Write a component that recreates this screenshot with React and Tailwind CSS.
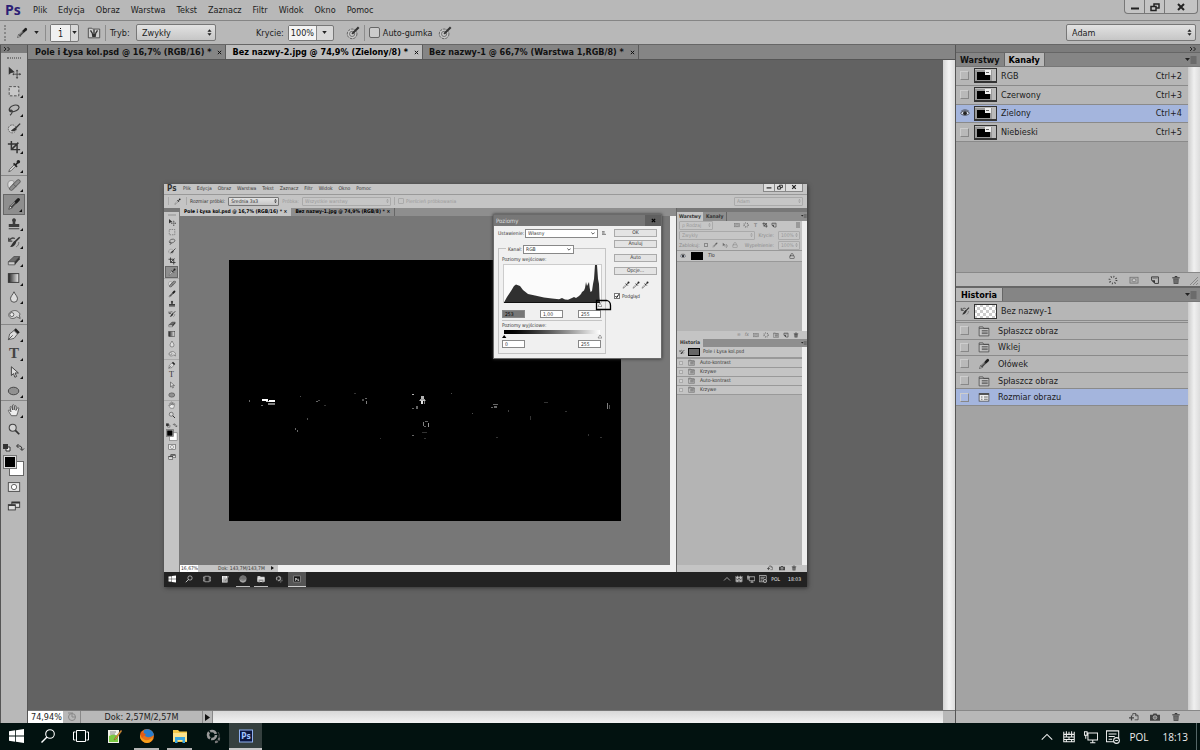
import React from 'react';
import { Lock } from 'lucide-react';

const MENU = ['Plik', 'Edycja', 'Obraz', 'Warstwa', 'Tekst', 'Zaznacz', 'Filtr', 'Widok', 'Okno', 'Pomoc'];

const GLYPHS = {
  move: (
    <g>
      <path d="M2 2 L2 11 L4.500 9 L9 8.200 Z" fill="#333" />
      <path d="M11.500 6v9M7 10.500h9" stroke="#444" strokeWidth="1" />
      <path d="M11.500 5l1.500 2h-3zM11.500 16l1.500-2h-3zM6 10.500l2-1.500v3zM16 10.500l-2-1.500v3z" fill="#444" />
    </g>
  ),
  marquee: <rect x="2.500" y="3" width="11" height="10.500" fill="#c8c8c8" stroke="#444" strokeDasharray="3 1.800" />,
  lasso: (
    <path d="M4 10C1 8 3 3.500 8 2.500s7 2 5 4.500-8 4-9 2.500 1-2 2-.5-.5 3-2.500 5" fill="none" stroke="#3a3a3a" strokeWidth="1.300" />
  ),
  quick: (
    <g>
      <circle cx="6" cy="9" r="4.500" fill="#ccc" stroke="#555" strokeDasharray="2 1" />
      <path d="M15 3L9.500 8.500" stroke="#333" strokeWidth="1.600" />
      <path d="M9.500 7.500c-2 .5-2.500 2-5 3.500 2 1.500 5 1 6.500-2z" fill="#333" />
    </g>
  ),
  crop: <path d="M5 1v10h10M1 4.500h10.500V15M5 11L13 3" fill="none" stroke="#333" strokeWidth="1.700" />,
  dropper: (
    <g>
      <path d="M8.500 6.500L3 12l-1 2.500L4.500 13.500 10 8z" fill="#e5e5e5" stroke="#444" strokeWidth=".9" />
      <path d="M7.500 5L11.500 9M9.500 7L13 3.500" stroke="#222" strokeWidth="1.800" />
      <circle cx="13" cy="3" r="2" fill="#222" />
    </g>
  ),
  heal: (
    <g>
      <path d="M2 4c3-2 6-1 6 1l-4 8c-3-1-4-6-2-9z" fill="#ddd" stroke="#777" strokeWidth=".8" />
      <path d="M5 12L13 4" stroke="#555" strokeWidth="5" strokeLinecap="round" />
      <path d="M5 12L13 4" stroke="#8d8d8d" strokeWidth="3.400" strokeLinecap="round" />
      <path d="M7.500 7.200l3.200 3.200" stroke="#555" strokeWidth="1" />
    </g>
  ),
  pencil: (
    <g>
      <path d="M2 14l1.500-4L6 12.500z" fill="#ddd" stroke="#333" strokeWidth=".8" />
      <path d="M4.500 11.500L10 6" stroke="#444" strokeWidth="3.200" />
      <path d="M10.500 5.500L13 3" stroke="#1d1d1d" strokeWidth="3.600" strokeLinecap="round" />
      <path d="M4.500 10.500L9 6" stroke="#aaa" strokeWidth="1" />
    </g>
  ),
  stamp: (
    <path d="M8 1.500a2.200 2.200 0 0 1 2 3.200C9.300 6 9.300 7 9.600 8H14v3.500H2V8h4.400C6.700 7 6.700 6 6 4.700A2.200 2.200 0 0 1 8 1.500zM2 12.800h12V14H2z" fill="#3c3c3c" />
  ),
  history: (
    <g>
      <path d="M14.500 2.500L8 9" stroke="#333" strokeWidth="1.800" />
      <path d="M9.500 6.500C6.500 7.500 6 10.500 3.500 13.500c3 .5 6-1.500 7-5z" fill="#333" />
      <path d="M3 6C4 4 6.500 3 9 4M2 3v4h4" fill="none" stroke="#444" strokeWidth="1.500" />
      <path d="M13.500 8c0 3-1 4.500-3 5.500" fill="none" stroke="#666" />
    </g>
  ),
  eraser: (
    <g>
      <path d="M1.500 10L8 4h6.500L9 10z" fill="#6c6c6c" stroke="#444" strokeWidth=".8" />
      <path d="M1.500 10H9v3.500H1.500z" fill="#ccc" stroke="#444" strokeWidth=".8" />
      <path d="M9 10l5.500-6v3L9 13.500z" fill="#333" />
    </g>
  ),
  gradient: (
    <g>
      <defs>
        <linearGradient id="tool-gradient"><stop stopColor="#222" /><stop offset="1" stopColor="#eee" /></linearGradient>
      </defs>
      <rect x="1.500" y="3" width="12" height="10" fill="url(#tool-gradient)" stroke="#333" />
    </g>
  ),
  drop: <path d="M8 2c1 3 4 5 4 8a4 4 0 0 1-8 0c0-3 3-5 4-8z" fill="#ddd" stroke="#444" />,
  dodge: (
    <g>
      <path d="M6 3.500c4-1.500 7 0 9 3.500l-1 1 1 4-4-2c-2 2-6 3-8 .5S2 5 6 3.500z" fill="#d5d5d5" stroke="#555" />
      <circle cx="5.500" cy="7.500" r="2.300" fill="#eee" stroke="#555" />
    </g>
  ),
  pen: (
    <g>
      <path d="M1.500 14.500L3 8l5-4 4 4-4 5z" fill="#ddd" stroke="#444" strokeWidth=".9" />
      <path d="M1.500 14.500L6.500 9.500" stroke="#444" />
      <path d="M9 2.500L13.500 7" stroke="#222" strokeWidth="3" />
    </g>
  ),
  arrow: <path d="M5 2v10l2.400-2.200L9 14l2-.9-1.800-4H13z" fill="#ddd" stroke="#333" />,
  ellipse: <ellipse cx="7.500" cy="8" rx="6" ry="4.300" fill="#909090" stroke="#3c3c3c" />,
  hand: (
    <path d="M5 14.500C3.500 12 2 10 1.500 8.500c.8-1 2 0 3 1.500L3.500 4.500c.8-1 1.700-.5 2 .5L6.300 8V2.500c.8-1 1.800-.5 1.800.3V8l1-4.500c.8-.8 1.700-.3 1.500.6L10.200 8.500l1.800-3c1-.5 1.700.2 1.300 1.200-1 3-1 5.300-2.300 7.800z" fill="#eee" stroke="#444" strokeWidth=".9" />
  ),
  zoom: (
    <g>
      <circle cx="6.500" cy="6.500" r="4" fill="#d5d5d5" stroke="#444" strokeWidth="1.200" />
      <path d="M9.500 9.500L14 14" stroke="#333" strokeWidth="2" />
    </g>
  ),
  mask: (
    <g>
      <rect x="1.500" y="3" width="13" height="10" fill="#e8e8e8" stroke="#444" />
      <circle cx="8" cy="8" r="3" fill="#fff" stroke="#555" />
    </g>
  ),
  screen: (
    <g fill="#ddd" stroke="#333">
      <rect x="5.500" y="3.500" width="9" height="6" />
      <path d="M5.500 4.200h9" strokeWidth="2" />
      <rect x="1.500" y="6.500" width="8" height="6" />
      <path d="M1.500 7.200h8" strokeWidth="1.500" />
    </g>
  ),
  target: (
    <g>
      <circle cx="7" cy="9" r="5.500" fill="#c8c8c8" stroke="#555" strokeDasharray="3 1" />
      <circle cx="7" cy="9" r="3" fill="none" stroke="#666" />
      <path d="M14.500 1.500L7 9" stroke="#333" strokeWidth="2.400" />
    </g>
  ),
  brushPanel: (
    <g>
      <path d="M1.500 2.500h4l1 1h8v10h-13z" fill="#cfcfcf" stroke="#444" />
      <path d="M4 5l2.500 4M8 4v5M12 5L9.500 9" stroke="#333" strokeWidth="1.500" />
      <path d="M5.500 9h5l-.5 3.500H6z" fill="#333" />
    </g>
  ),
  state: (
    <g fill="none" stroke="#444">
      <path d="M1.500 2.500h5l1 2h7v10h-13z" fill="#c6c6c6" />
      <path d="M1.500 4.500h13M5 7.500h8M5 9.500h8M5 11.500h8" />
    </g>
  ),
  dialogState: (
    <g fill="none" stroke="#444">
      <rect x="1.500" y="3.500" width="13" height="10" fill="#eee" />
      <path d="M1.500 4.200h13" strokeWidth="2" />
      <path d="M4 8h2M8 8h5M4 11h2M8 11h5" />
    </g>
  ),
  loadSel: <circle cx="8" cy="8" r="5.500" fill="none" stroke="#444" strokeWidth="3" strokeDasharray="1.500 2.820" />,
  saveMask: (
    <g>
      <rect x="1.500" y="3.500" width="13" height="9.500" fill="#aaa" stroke="#666" />
      <rect x="5" y="6" width="6" height="4.500" rx="2" fill="#ccc" stroke="#666" />
    </g>
  ),
  newItem: (
    <g>
      <path d="M2.500 3h11v10.500H8L2.500 8.500z" fill="#bbb" stroke="#3a3a3a" strokeWidth="1.500" />
      <path d="M2.500 8.500H8v5z" fill="#333" />
      <path d="M4 5h8" stroke="#444" />
    </g>
  ),
  trash: (
    <g>
      <path d="M3.500 5.500h9l-.7 9H4.200z" fill="#555" />
      <path d="M2 4.500h12M6 2.500h4" stroke="#333" strokeWidth="1.600" />
      <path d="M6.500 7v6M9.500 7v6" stroke="#aaa" strokeWidth=".8" />
    </g>
  ),
  newDoc: (
    <g fill="none" stroke="#444" strokeWidth="1.300">
      <path d="M6 6V2.500h5L14.500 6v6.500H9M10.500 2.500V6h4" />
      <path d="M0 9.500h8M4 5.500v8" strokeWidth="2" />
    </g>
  ),
  camera: (
    <g>
      <path d="M0 4.500h4.500l1-2h5l1 2H16v9.500H0z" fill="#444" />
      <circle cx="8" cy="8.800" r="2.900" fill="#777" stroke="#ccc" />
    </g>
  ),
  eye: (
    <g>
      <path d="M1 8.500C4 3.500 12 3.500 15 8.500 12 12.500 4 12.500 1 8.500z" fill="#d8dff0" stroke="#222" strokeWidth="1.200" />
      <circle cx="8" cy="8.200" r="3" fill="#222" />
      <path d="M1.500 5.500C5 2 11 2 14.500 5.500" fill="none" stroke="#333" />
    </g>
  ),
};

function Glyph({ name, className }) {
  return (
    <svg viewBox="0 0 16 16" className={className} fill="none" aria-hidden="true">
      {GLYPHS[name]}
    </svg>
  );
}

const TOOL_GROUPS = [
  { big: 'h-[112px]', small: 'h-[60px]', tools: ['move', 'marquee', 'lasso', 'quick', 'crop', 'dropper'] },
  { big: 'h-[149px]', small: 'h-[81px]', tools: ['heal', 'pencil', 'stamp', 'history', 'eraser', 'gradient', 'drop', 'dodge'] },
  { big: 'h-[76px]', small: 'h-[41px]', tools: ['pen', 'type', 'arrow', 'ellipse'] },
  { big: 'h-[38px]', small: 'h-[20px]', tools: ['hand', 'zoom'] },
];

function Toolbar({ mini = false, active }) {
  const icon = mini ? 'h-2 w-2' : 'h-3.5 w-3.5';
  return (
    <div className={mini ? 'flex w-[15px] shrink-0 flex-col bg-[#c4c4c4]' : 'flex w-7 shrink-0 flex-col border-x border-[#555] bg-[#b8b8b8]'}>
      <div className={mini ? 'h-1 bg-[#777]' : 'flex h-2 items-center bg-[#7c7c7c] pl-0.5'}>
        {!mini && <Chevrons />}
      </div>
      <div className={mini ? 'mx-auto my-0.5 h-0.5 w-2 bg-[#aaa]' : 'mx-auto mt-1 mb-1 h-0.5 w-3.5 border-y border-dotted border-[#777]'} />
      {TOOL_GROUPS.map((group, i) => (
        <div
          key={i}
          className={`flex flex-col ${mini ? group.small : group.big} ${i ? (mini ? 'border-t border-[#aaa]' : 'border-t border-[#888]') : ''}`}
        >
          {group.tools.map((tool) => (
            <button
              key={tool}
              aria-label={tool}
              className={`relative flex flex-1 items-center justify-center ${mini ? 'mx-px' : 'mx-0.5'} ${
                tool === active ? 'border border-[#666] bg-[#8e8e8e]' : ''
              }`}
            >
              {tool === 'type' ? (
                <span className={mini ? "font-['Liberation_Serif',serif] text-[8px] leading-none" : "font-['Liberation_Serif',serif] text-[15px] leading-none font-bold text-[#444]"}>T</span>
              ) : (
                <Glyph name={tool} className={icon} />
              )}
              {!mini && tool !== 'move' && tool !== 'zoom' && (
                <svg viewBox="0 0 3 3" className="absolute right-0.5 bottom-0.5 h-[3px] w-[3px]" aria-hidden="true">
                  <path d="M3 0v3H0z" fill="#111" />
                </svg>
              )}
            </button>
          ))}
        </div>
      ))}
      <svg viewBox="0 0 26 36" className={mini ? 'mx-auto mt-0.5 h-[20px] w-[14px] shrink-0' : 'mt-1 h-9 w-[26px] shrink-0'} role="img" aria-label="Kolory">
        <path d="M5 5h4v4H5z" fill="#eee" stroke="#333" />
        <path d="M2 2h5v5H2z" fill="#333" />
        <path d="M16 4h3q2 0 2 4M17.500 2l-2 2 2 2M19 6.500l2 2 2-2" fill="none" stroke="#333" />
        <rect x="8.500" y="19.500" width="14" height="14" fill="#fff" stroke="#666" />
        <rect x="2.500" y="13.500" width="13" height="13" fill="#000" stroke="#777" />
        <rect x="3.500" y="14.500" width="11" height="11" fill="#000" stroke="#ddd" />
      </svg>
      <button aria-label="Maska" className={mini ? 'flex h-2.5 items-center justify-center' : 'flex h-[18px] items-center justify-center'}>
        <Glyph name="mask" className={icon} />
      </button>
      <button aria-label="Tryb ekranu" className={mini ? 'flex h-2.5 items-center justify-center' : 'flex h-5 items-center justify-center'}>
        <Glyph name="screen" className={icon} />
      </button>
    </div>
  );
}

function Chevrons() {
  return (
    <svg viewBox="0 0 8 6" className="h-1.5 w-2" aria-hidden="true">
      <path d="M1 1l2 2-2 2M4.500 1l2 2-2 2" fill="none" stroke="#222" />
    </svg>
  );
}

function WindowButtons({ mini = false }) {
  const cell = mini ? 'flex w-[11px] items-center justify-center' : 'flex w-5 items-center justify-center';
  const icon = mini ? 'h-1.5 w-1.5' : 'h-2.5 w-2.5';
  return (
    <div
      className={
        mini
          ? 'mr-1 flex h-2 divide-x divide-[#888] border border-t-0 border-[#888] bg-[#ddd]'
          : 'mr-0.5 flex h-3.5 divide-x divide-[#777] rounded-b-sm border border-t-0 border-[#777] bg-[#c4c4c4]'
      }
    >
      <button aria-label="Minimalizuj" className={cell}>
        <svg viewBox="0 0 10 10" className={icon}><path d="M1 6.500h8" stroke="#222" strokeWidth="2" /></svg>
      </button>
      <button aria-label="Przywróć" className={cell}>
        <svg viewBox="0 0 10 10" className={icon} fill="none" stroke="#222" strokeWidth="1.500"><path d="M4 5V2h5v4H6M1 4.500h5v4H1z" /></svg>
      </button>
      <button aria-label="Zamknij" className={mini ? 'flex w-4 items-center justify-center' : 'flex w-8 items-center justify-center'}>
        <svg viewBox="0 0 10 10" className={icon}><path d="M2 2l6 6M8 2L2 8" stroke="#222" strokeWidth="2" /></svg>
      </button>
    </div>
  );
}

function PickBox({ value, label, className, mini = false, dim = false }) {
  return (
    <span
      className={`relative flex items-center ${mini ? 'h-[9px] rounded-[1px]' : 'h-[17px] rounded-xs'} border ${
        dim ? 'border-[#aaa] bg-[#c6c6c6] text-[#999]' : 'border-[#777] bg-linear-to-b from-[#e2e2e2] to-[#c6c6c6]'
      } ${className}`}
    >
      <select aria-label={label} className={`h-full w-full appearance-none bg-transparent outline-none ${mini ? 'px-0.5' : 'px-[5px]'}`}>
        <option>{value}</option>
      </select>
      <svg viewBox="0 0 6 8" className={`pointer-events-none absolute ${mini ? 'right-px h-1 w-[3px]' : 'right-[3px] h-[7px] w-[5px]'}`} aria-hidden="true">
        <path d="M3 0l2.500 3h-5zM3 8L.5 5h5z" fill={dim ? '#999' : '#222'} />
      </svg>
    </span>
  );
}

function Separator({ mini = false }) {
  return <span className={mini ? 'h-2 w-px bg-[#aaa]' : 'h-4 w-px bg-[#8c8c8c]'} />;
}

function PanelMenuIcon({ mini = false }) {
  return (
    <svg viewBox="0 0 12 8" className={mini ? 'ml-auto h-1 w-1.5 self-center' : 'mr-[3px] ml-auto h-2 w-3 self-center'} aria-hidden="true">
      <path d="M0 2h5L2.500 5z" fill="#222" />
      <path d="M5.500 1h6M5.500 3h6M5.500 5h6M5.500 7h6" stroke="#444" strokeWidth=".8" />
    </svg>
  );
}

/* ---------- Open document: a flattened capture of another session ---------- */

const SPECKS = [
  [20, 140, 1, 2, 0.4], [33, 139, 6, 2, 1], [37, 141, 3, 1, 0.8], [40, 140, 6, 2, 1], [39, 143, 7, 2, 0.5], [32, 145, 2, 1, 0.4],
  [71, 136, 1, 1, 0.3], [87, 141, 2, 1, 0.4], [89, 140, 2, 1, 0.3], [95, 145, 2, 1, 0.2], [125, 133, 2, 1, 0.2], [133, 139, 2, 2, 0.3],
  [136, 138, 2, 1, 0.4], [137, 141, 1, 3, 0.5], [78, 158, 1, 2, 0.3], [66, 168, 1, 2, 0.4], [68, 170, 1, 2, 0.4], [183, 134, 2, 1, 0.7],
  [192, 136, 3, 3, 0.7], [191, 139, 5, 2, 0.6], [192, 141, 2, 3, 0.9], [195, 141, 1, 3, 0.5], [190, 140, 7, 1, 0.4], [187, 146, 2, 3, 0.4], [183, 148, 2, 1, 0.4],
  [194, 162, 1, 4, 0.5], [196, 161, 3, 1, 0.4], [199, 163, 1, 4, 0.6], [195, 166, 2, 1, 0.4], [183, 175, 2, 1, 0.4], [193, 172, 5, 1, 0.2],
  [222, 133, 1, 1, 0.3], [243, 153, 1, 1, 0.3], [264, 144, 5, 1, 0.4], [265, 146, 3, 2, 0.4], [262, 147, 2, 1, 0.4], [279, 150, 1, 2, 0.25],
  [301, 156, 1, 4, 0.2], [315, 142, 4, 1, 0.2], [378, 143, 1, 6, 0.5], [380, 145, 1, 4, 0.3], [359, 174, 1, 2, 0.2],
  [267, 177, 2, 1, 0.2], [371, 177, 2, 1, 0.2], [336, 151, 2, 1, 0.2], [151, 178, 1, 1, 0.2], [195, 178, 2, 1, 0.2],
];

function FieldBox({ value, label, selected = false }) {
  return (
    <input
      aria-label={label}
      defaultValue={value}
      className={`h-2 w-[23px] border border-[#888] px-0.5 ${selected ? 'bg-[#777] text-black' : 'bg-white'}`}
    />
  );
}

function DialogSelect({ value, id, className }) {
  return (
    <span className={`relative flex h-[9px] items-center border border-[#888] bg-white ${className}`}>
      <select id={id} className="h-full w-full appearance-none bg-transparent px-0.5 outline-none">
        <option>{value}</option>
      </select>
      <svg viewBox="0 0 6 4" className="pointer-events-none absolute right-0.5 h-[3px] w-1" aria-hidden="true">
        <path d="M.5 .5L3 3 5.500 .5" fill="none" stroke="#333" strokeWidth="1.200" />
      </svg>
    </span>
  );
}

function LevelsDialog() {
  return (
    <div className="absolute top-[30px] left-[329px] w-[169px] border border-[#6a6a6a] bg-[#f0f0f0] shadow-[0_0_3px_#333]">
      <div className="flex h-[11px] items-center justify-between bg-[#777] pl-0.5 text-[6px] text-[#ddd]">
        Poziomy
        <button aria-label="Zamknij poziomy" className="flex h-[11px] w-4 items-center justify-center bg-[#606060]">
          <svg viewBox="0 0 6 6" className="h-[5px] w-[5px]"><path d="M1 1l4 4M5 1L1 5" stroke="#000" strokeWidth="1.500" /></svg>
        </button>
      </div>
      <div className="flex gap-2 px-1 pt-[3px] pb-1">
        <div className="w-[108px]">
          <div className="flex h-[9px] items-center justify-between">
            <label htmlFor="preset">Ustawienie:</label>
            <span className="flex items-center gap-1">
              <DialogSelect id="preset" value="Własny" className="w-[73px]" />
              <svg viewBox="0 0 6 6" className="h-1 w-1"><path d="M0 1h4M0 3h4M0 5h6" stroke="#444" /></svg>
            </span>
          </div>
          <div className="mt-2.5 h-[106px] border border-[#c4c4c4] px-[3px]">
            <div className="-mt-1 ml-1 flex w-[68px] items-center justify-between bg-[#f0f0f0] pl-0.5">
              <label htmlFor="channel">Kanał:</label>
              <DialogSelect id="channel" value="RGB" className="w-[51px]" />
            </div>
            <div className="mt-0.5">Poziomy wejściowe:</div>
            <svg viewBox="0 0 100 44" className="mt-px block h-11 w-[100px]" role="img" aria-label="Histogram">
              <rect x="1.500" y=".5" width="98" height="38" fill="#fbfbfb" stroke="#ccc" />
              <path d="M2 38.500L5 33 9 27 12 22 14 20.500 18 22 21 26 26 30 33 31.500 42 33.500 50 34.500 57 35.200 60 34 63 35.500 66 35.800 70 34 72 33 74 34 77 32 79 30 80 28 82 26.500 83 24 84 18 85 22 86 20 87 18 87.700 24 88.500 28 90 27 91 20 92 15 93 1 95 1 96 15 97 20 97.500 33 98 38.500z" fill="#303030" />
              <path d="M2 38.500h96" stroke="#111" />
              <path d="M96 42.500l2-3.500 2 3.500z" fill="#fff" stroke="#777" strokeWidth=".7" />
            </svg>
            <div className="flex justify-between pt-0.5 pr-px">
              <FieldBox label="Wejście cienie" value="253" selected />
              <FieldBox label="Wejście gamma" value="1,00" />
              <FieldBox label="Wejście światła" value="255" />
            </div>
            <div className="mt-0.5 border-t border-[#c4c4c4] pt-px">Poziomy wyjściowe:</div>
            <div className="mx-0.5 mt-px h-1 bg-linear-to-r from-black to-white" />
            <svg viewBox="0 0 100 5" className="block h-[5px] w-[100px]" aria-hidden="true">
              <path d="M0 4l2.200-3L4.400 4z" fill="#000" />
              <path d="M96 4l2-3 2 3z" fill="#fff" stroke="#777" strokeWidth=".7" />
            </svg>
            <div className="flex justify-between pt-px pr-px">
              <FieldBox label="Wyjście cienie" value="0" />
              <FieldBox label="Wyjście światła" value="255" />
            </div>
          </div>
        </div>
        <div className="flex w-11 flex-col">
          {[['OK', 'mb-[3px]'], ['Anuluj', 'mb-1.5'], ['Auto', 'mb-[5px]'], ['Opcje...', 'mb-1.5']].map(([text, gap]) => (
            <button key={text} className={`flex h-2 items-center justify-center border border-[#aaa] bg-[#e4e4e4] ${gap}`}>{text}</button>
          ))}
          <div className="mx-2 mb-1 flex justify-between">
            {['czerni', 'szarości', 'bieli'].map((n) => (
              <button key={n} aria-label={`Próbnik ${n}`}><Glyph name="dropper" className="h-2 w-2" /></button>
            ))}
          </div>
          <label className="flex items-center gap-0.5">
            <span className="relative flex">
              <input type="checkbox" defaultChecked className="h-1.5 w-1.5 appearance-none border border-[#777] bg-white" />
              <svg viewBox="0 0 6 6" className="pointer-events-none absolute inset-0 h-1.5 w-1.5"><path d="M1.500 3l1.200 1.500L4.800 1.300" fill="none" stroke="#000" /></svg>
            </span>
            Podgląd
          </label>
        </div>
      </div>
      <svg viewBox="0 0 17 12" className="absolute top-[84px] left-[101px] h-3 w-[17px]" aria-hidden="true">
        <path d="M1.500 1.500h10.500q3.500 1 3.500 5v4h-14z" fill="none" stroke="#000" strokeWidth="1.300" />
      </svg>
    </div>
  );
}

function InnerPanels() {
  return (
    <div className="flex w-[131px] shrink-0 flex-col border-l border-[#666] bg-[#b4b4b4]">
      <div className="h-1 bg-[#777]" />
      <div className="flex h-[9px] items-center bg-[#8e8e8e] font-bold">
        <button className="h-full bg-[#c4c4c4] px-0.5">Warstwy</button>
        <button className="h-full border-r border-[#666] px-[3px]">Kanały</button>
        <PanelMenuIcon mini />
      </div>
      <div className="flex min-h-0 flex-1">
        <div className="flex min-w-0 flex-1 flex-col">
          <div className="flex flex-col gap-px bg-[#c4c4c4] px-0.5 text-[#888]">
            <div className="flex items-center justify-between">
              <PickBox mini dim label="Filtr warstw" value="ρ Rodzaj" className="w-[34px]" />
              <span className="flex gap-[3px]">
                <Glyph name="saveMask" className="h-1.5 w-1.5" />
                <Glyph name="loadSel" className="h-1.5 w-1.5" />
                <span className="px-0.5 font-bold">T</span>
                <Glyph name="crop" className="h-1.5 w-1.5" />
                <Glyph name="newItem" className="h-1.5 w-1.5" />
                <span className="ml-4 h-1.5 w-1 bg-[#999]" />
              </span>
            </div>
            <div className="flex items-center gap-1">
              <PickBox mini dim label="Tryb mieszania" value="Zwykły" className="flex-1" />
              Krycie:
              <PickBox mini dim label="Krycie warstwy" value="100%" className="w-[22px]" />
            </div>
            <div className="flex items-center gap-1">
              Zablokuj:
              <span className="h-1 w-1 border border-[#888]" />
              <Glyph name="pencil" className="h-1.5 w-1.5 opacity-60" />
              <Glyph name="move" className="h-1.5 w-1.5 opacity-60" />
              <Lock className="h-1.5 w-1.5" />
              <span className="ml-auto">Wypełnienie:</span>
              <PickBox mini dim label="Wypełnienie" value="100%" className="w-[22px]" />
            </div>
          </div>
          <div className="flex h-3 items-center gap-1 border-y border-[#999] bg-[#c4c4c4] px-[3px]">
            <Glyph name="eye" className="h-1.5 w-1.5" />
            <span className="ml-px h-2 w-3 bg-black" />
            <span className="flex-1 pl-px italic">Tło</span>
            <Lock className="mr-1 h-1.5 w-1.5" />
          </div>
        </div>
        <div className="w-[5px] bg-[#eee]" />
      </div>
      <div className="flex h-2 items-center justify-end gap-1 bg-[#c4c4c4] pr-2 text-[#777]">
        <span>∞</span>
        <span className="italic">fx</span>
        {['saveMask', 'loadSel', 'state', 'newItem', 'trash'].map((n) => <Glyph key={n} name={n} className="h-1.5 w-1.5" />)}
      </div>
      <div className="flex h-2 items-center bg-[#8e8e8e] font-bold">
        <button className="h-full bg-[#c4c4c4] px-[3px]">Historia</button>
        <PanelMenuIcon mini />
      </div>
      <div className="flex h-[218px]">
        <div className="flex-1">
          <div className="flex h-3 items-center gap-[3px] border-b-2 border-[#999] bg-[#c4c4c4] px-0.5">
            <Glyph name="history" className="h-1.5 w-1.5" />
            <span className="h-2 w-3 border border-black bg-[#666]" />
            Pole i Łysa kol.psd
          </div>
          {['Auto-kontrast', 'Krzywe', 'Auto-kontrast', 'Krzywe'].map((text, i) => (
            <div key={i} className="flex h-[9px] items-center border-b border-[#999] bg-[#c4c4c4] px-0.5">
              <span className="h-1 w-1 border border-[#aaa] bg-[#d0d0d0]" />
              <Glyph name="state" className="mx-[5px] h-[7px] w-[7px]" />
              {text}
            </div>
          ))}
        </div>
        <div className="w-[5px] bg-[#eee]" />
      </div>
      <div className="flex h-[7px] items-center justify-end gap-1.5 bg-[#c4c4c4] pr-2.5">
        {['newDoc', 'camera', 'trash'].map((n) => <Glyph key={n} name={n} className="h-1.5 w-1.5" />)}
      </div>
    </div>
  );
}

function InnerTask({ name }) {
  const running = name === 'browser' || name === 'files';
  return (
    <span
      className={`flex h-full items-end justify-center ${name === 'start' ? 'w-4' : 'w-[18px]'} ${name === 'ps' ? 'bg-[#555]' : ''}`}
    >
      <span
        className={`flex h-full items-center justify-center border-b ${
          name === 'ps' ? 'w-full border-[#ccc]' : running ? 'w-3.5 border-[#bbb]' : 'w-3.5 border-transparent'
        }`}
      >
        <TaskIcon name={name} className="h-2 w-2 grayscale" />
      </span>
    </span>
  );
}

function OpenDocument() {
  return (
    <div className="relative flex h-[403px] w-[643px] shrink-0 flex-col bg-[#c4c4c4] text-[5px] leading-[7px] text-[#333] shadow-[1px_1px_4px_#333]">
      <div className="flex h-[11px] items-center gap-1.5 border-b border-[#999] pl-[3px]">
        <span className="w-2.5 text-[8px] font-bold">Ps</span>
        {MENU.map((m) => <button key={m}>{m}</button>)}
        <span className="ml-auto self-start"><WindowButtons mini /></span>
      </div>
      <div className="flex h-[13px] items-center gap-[3px] px-1">
        <Separator mini />
        <Glyph name="dropper" className="mx-0.5 h-[7px] w-[7px]" />
        <Separator mini />
        <span>Rozmiar próbki:</span>
        <PickBox mini label="Rozmiar próbki" value="Średnia 3x3" className="w-[51px]" />
        <span className="text-[#999]">Próbka:</span>
        <PickBox mini dim label="Próbka" value="Wszystkie warstwy" className="w-[89px]" />
        <Separator mini />
        <label className="flex items-center gap-0.5 text-[#999]">
          <input type="checkbox" disabled className="h-1.5 w-1.5 appearance-none rounded-[1px] border border-[#aaa]" />
          Pierścień próbkowania
        </label>
        <PickBox mini dim label="Obszar roboczy dokumentu" value="Adam" className="ml-auto w-[69px]" />
      </div>
      <div className="flex min-h-0 flex-1">
        <Toolbar mini active="dropper" />
        <div className="flex min-w-0 flex-1 flex-col border-l border-[#777]">
          <div className="flex h-2 items-center bg-[#8e8e8e] font-bold text-black">
            <button className="h-full bg-[#c4c4c4] px-1 whitespace-nowrap">Pole i Łysa kol.psd @ 16,7% (RGB/16) * ×</button>
            <button className="h-full border-r border-[#666] px-1 whitespace-nowrap">Bez nazwy-1.jpg @ 74,9% (RGB/8) * ×</button>
          </div>
          <div className="flex min-h-0 flex-1">
            <div className="flex flex-1 items-center justify-center bg-[#777]">
              <svg viewBox="0 0 392 261" className="h-[261px] w-[392px] bg-black" role="img" aria-label="Zdjęcie z jasnymi punktami">
                {SPECKS.map(([x, y, w, h, o], i) => <rect key={i} x={x} y={y} width={w} height={h} fill="#fff" opacity={o} />)}
              </svg>
            </div>
            <div className="w-1.5 bg-[#f0f0f0]" />
          </div>
          <div className="flex h-[7px] items-center bg-[#f0f0f0]">
            <span className="w-[18px] bg-white pl-px">16,67%</span>
            <span className="flex h-full w-20 items-center justify-between bg-[#c4c4c4] pr-1 pl-5">
              Dok: 143,7M/143,7M
              <svg viewBox="0 0 5 7" className="h-1 w-[3px]"><path d="M0 0v7l5-3.500z" fill="#111" /></svg>
            </span>
          </div>
        </div>
        <InnerPanels />
      </div>
      <div className="flex h-[15px] items-center bg-[#222] text-[#eee]">
        {['start', 'search', 'tasks', 'notes', 'browser', 'files', 'sync', 'ps'].map((n) => <InnerTask key={n} name={n} />)}
        <span className="ml-auto flex items-center gap-1 pr-1.5">
          {['chevron', 'wall', 'network', 'messages'].map((n) => <TrayIcon key={n} name={n} className="h-2 w-2" />)}
          <span>POL</span>
          <span className="pl-1">18:03</span>
        </span>
      </div>
      <LevelsDialog />
    </div>
  );
}

/* ---------- Desktop taskbar ---------- */

const TASK_ART = {
  start: <path d="M1 3.200L7.200 2.300V7.600H1zM8 2.200L16 1V7.600H8zM1 8.400H7.200V13.700L1 12.800zM8 8.400H16V15L8 13.800z" fill="#fff" />,
  search: <g fill="none" stroke="#fff"><circle cx="10" cy="6" r="4.300" strokeWidth="1.100" /><path d="M7 9L1.500 14.500" strokeWidth="1.400" /></g>,
  tasks: <path d="M3.500 2.500h9v11h-9zM2.500 4H.5v8h2M13.500 4h2v8h-2" fill="none" stroke="#fff" />,
  notes: (
    <g>
      <path d="M2 2h11v13H2z" fill="#f2f2ea" />
      <path d="M3 8q4-3 9 0v6H3z" fill="#7ac943" />
      <path d="M4 4h6M4 6h5" stroke="#888" />
      <path d="M15 2L9 10l-1 2 2-1 6-8z" fill="#e9a825" stroke="#744" strokeWidth=".5" />
    </g>
  ),
  browser: (
    <g>
      <circle cx="8" cy="8" r="7" fill="#e8701a" />
      <path d="M5 2c4-2 9 0 10 5-2 1-4 3-7 2S4 5 5 2z" fill="#2a7dcb" />
      <path d="M1 6c1 3 2 5 5 6s6-1 8-3c0 3-3 6-6 6S1 12 1 8z" fill="#f6a01c" />
      <path d="M2 3c1 2 3 2 5 3-1 2-3 2-4 4-1-2-2-4-1-7z" fill="#e55a12" />
    </g>
  ),
  files: (
    <g>
      <path d="M1 2h5l1.500 1.500H15V14H1z" fill="#f3c84b" />
      <path d="M1 5h14v8H1z" fill="#fce38d" />
      <path d="M3 9h10v6h-2.500v-3h-5v3H3z" fill="#3aa7e0" />
    </g>
  ),
  sync: (
    <g fill="none">
      <circle cx="7" cy="7" r="4" stroke="#999" strokeWidth="2.600" strokeDasharray="7 1.200" />
      <path d="M14 9.500c.5 3-2 5-5 4.500" stroke="#777" strokeWidth="2.200" strokeDasharray="3 1" />
      <path d="M13 4q2 2 1 5" stroke="#555" />
    </g>
  ),
  ps: (
    <g>
      <rect x="1.500" y="2" width="13" height="12" fill="#0b1640" stroke="#8fb0f0" />
      <text x="8" y="11" textAnchor="middle" fontSize="8" fontWeight="bold" fill="#9fc3ff">Ps</text>
    </g>
  ),
};

function TaskIcon({ name, className }) {
  return <svg viewBox="0 0 16 16" className={className} aria-hidden="true">{TASK_ART[name]}</svg>;
}

const TRAY_ART = {
  chevron: <path d="M2 11l6-6 6 6" />,
  wall: <path d="M2 2v11.500h12V2M2 5h12M2 8h12M2 10.800h12M5 1.500v3.500M8 2v3M11 1.500v3.500M5 5v3M11 5v3M8 8v2.800M5 10.800v2.700M11 10.800v2.700" />,
  network: <path d="M4.500 3.500h11v8h-11zM10 11.500v3M7 14.500h6M.5 2h3v4h-3zM2 6v4" />,
  messages: <g><path d="M9 13.500H.5V1h14v8M3 4.500h9M3 7.500h7M3 10.500h4" /><circle cx="12" cy="12" r="3.300" /><path d="M10.500 12h3" /></g>,
};

function TrayIcon({ name, className }) {
  return (
    <svg viewBox="0 0 16 16" className={className} fill="none" stroke="#eee" strokeWidth="1.200" aria-hidden="true">
      {TRAY_ART[name]}
    </svg>
  );
}

const TASKS = [
  { name: 'start', label: 'Start' },
  { name: 'search', label: 'Szukaj' },
  { name: 'tasks', label: 'Widok zadań' },
  { name: 'notes', label: 'Notatnik' },
  { name: 'browser', label: 'Przeglądarka', running: true },
  { name: 'files', label: 'Pliki', running: true },
  { name: 'sync', label: 'Synchronizacja' },
  { name: 'ps', label: 'Photoshop', active: true },
];

function Taskbar() {
  return (
    <footer className="flex h-[27px] shrink-0 items-center bg-[#021210] text-[#eee]">
      {TASKS.map((t) => (
        <button
          key={t.name}
          aria-label={t.label}
          className={`flex h-full justify-center ${t.name === 'start' ? 'w-[31px]' : 'w-[33px]'} ${t.active ? 'bg-[#35403f]' : ''}`}
        >
          <span
            className={`flex h-full items-center justify-center border-b-2 ${
              t.active ? 'w-full border-[#c8c8c8]' : t.running ? 'w-[25px] border-[#b4b4b4]' : 'w-[25px] border-transparent'
            }`}
          >
            <TaskIcon name={t.name} className="h-4 w-4" />
          </span>
        </button>
      ))}
      <div className="ml-auto flex h-full items-center gap-2 font-['Open_Sans',sans-serif] text-[10px]">
        {['chevron', 'wall', 'network', 'messages'].map((n) => <TrayIcon key={n} name={n} className="h-3.5 w-3.5" />)}
        <span className="pl-px">POL</span>
        <span className="pl-1.5">18:13</span>
        <span className="h-full w-1 border-l border-[#566]" />
      </div>
    </footer>
  );
}

/* ---------- Application chrome ---------- */

function TopBars() {
  return (
    <header className="shrink-0">
      <nav className="flex h-5 items-center gap-[11px] bg-[#b8b8b8] pl-[5px]">
        <span className="w-[17px] font-['Open_Sans',sans-serif] text-[14px] leading-4 font-bold text-[#2c1f75]">Ps</span>
        {MENU.map((m) => <button key={m}>{m}</button>)}
        <span className="ml-auto self-start"><WindowButtons /></span>
      </nav>
      <div className="flex h-[25px] items-center gap-1 border-t border-b border-[#858585] border-b-[#666] bg-[#b8b8b8] pr-1 pl-1">
        <span className="h-4 border-l-2 border-dotted border-[#888]" />
        <Glyph name="pencil" className="ml-1.5 h-3 w-3" />
        <span className="mx-0.5 flex"><Caret /></span>
        <Separator />
        <span className="flex h-[18px] items-stretch rounded-xs border border-[#777] bg-[#d8d8d8]">
          <span className="flex w-[19px] flex-col items-center gap-px bg-[#f0f0f0] pt-[3px] leading-[9px]">
            <span className="h-px w-px bg-black" />
            1
          </span>
          <button aria-label="Wybierz pędzel" className="flex w-2 items-center justify-center border-l border-[#888]"><Caret /></button>
        </span>
        <button aria-label="Panel pędzli" className="ml-1"><Glyph name="brushPanel" className="h-3.5 w-3.5" /></button>
        <Separator />
        <span className="w-[22px]">Tryb:</span>
        <PickBox label="Tryb" value="Zwykły" className="w-20" />
        <label htmlFor="opacity" className="pl-9">Krycie:</label>
        <span className="flex h-4 rounded-xs border border-[#777] bg-[#d8d8d8]">
          <input id="opacity" defaultValue="100%" className="w-[27px] bg-[#f4f4f4] pl-0.5" />
          <button aria-label="Suwak krycia" className="flex w-[17px] items-center justify-center border-l border-[#888]"><Caret /></button>
        </span>
        <button aria-label="Nacisk krycia" className="ml-2"><Glyph name="target" className="h-3.5 w-3.5" /></button>
        <Separator />
        <label className="flex items-center gap-[3px]">
          <input type="checkbox" className="h-[11px] w-[11px] appearance-none rounded-xs border border-[#666] bg-[#ccc]" />
          Auto-gumka
        </label>
        <button aria-label="Nacisk rozmiaru" className="ml-0.5"><Glyph name="target" className="h-3.5 w-3.5" /></button>
        <PickBox label="Obszar roboczy" value="Adam" className="ml-auto w-[130px]" />
      </div>
    </header>
  );
}

function Caret() {
  return <svg viewBox="0 0 6 4" className="h-[3px] w-[5px] shrink-0" aria-hidden="true"><path d="M0 0h6L3 4z" fill="#222" /></svg>;
}

const TABS = [
  { title: 'Pole i Łysa kol.psd @ 16,7% (RGB/16) *' },
  { title: 'Bez nazwy-2.jpg @ 74,9% (Zielony/8) *', active: true },
  { title: 'Bez nazwy-1 @ 66,7% (Warstwa 1,RGB/8) *' },
];

function Workspace() {
  return (
    <main className="flex min-w-0 flex-1 flex-col">
      <div className="flex h-[15px] shrink-0 border-b border-[#555] bg-[#858585] pl-px">
        {TABS.map((tab) => (
          <div
            key={tab.title}
            className={`flex items-center gap-1.5 border-r border-[#5c5c5c] pr-[3px] pl-1.5 font-bold whitespace-nowrap ${
              tab.active ? 'bg-[#bdbdbd] text-black' : 'text-[#111]'
            }`}
          >
            <button>{tab.title}</button>
            <button aria-label="Zamknij kartę">
              <svg viewBox="0 0 6 6" className="h-[5px] w-[5px]"><path d="M1 1l4 4M5 1L1 5" stroke="#111" strokeWidth="1.200" /></svg>
            </button>
          </div>
        ))}
      </div>
      <div className="flex min-h-0 flex-1">
        <div className="flex flex-1 items-center justify-center bg-[#626262]">
          <OpenDocument />
        </div>
        <div className="w-3 bg-linear-to-r from-[#d5d5d5] via-[#f4f4f4] to-[#dcdcdc]" />
      </div>
      <div className="flex h-[13px] shrink-0 items-center border-t border-[#777] bg-linear-to-b from-[#d8d8d8] to-[#f2f2f2]">
        <input aria-label="Powiększenie" defaultValue="74,94%" className="h-full w-[35px] bg-white pl-[3px]" />
        <span className="flex h-full w-[18px] items-center justify-center border-r border-[#888] bg-[#b8b8b8]">
          <svg viewBox="0 0 10 10" className="h-2.5 w-2.5" fill="none" stroke="#888"><circle cx="5" cy="5" r="3.500" /><path d="M5 2v3h3M1 1h5" /></svg>
        </span>
        <span className="flex h-full w-[122px] items-center justify-center border-r border-[#888] bg-[#b8b8b8]">Dok: 2,57M/2,57M</span>
        <button aria-label="Opcje stanu" className="flex h-full w-2.5 items-center justify-center border-r border-[#888] bg-[#b8b8b8]">
          <svg viewBox="0 0 5 7" className="h-[7px] w-[5px]"><path d="M0 0v7l5-3.500z" fill="#111" /></svg>
        </button>
        <span className="ml-auto h-full w-3 bg-[#b8b8b8]" />
      </div>
    </main>
  );
}

const CHANNELS = [
  { name: 'RGB', keys: 'Ctrl+2' },
  { name: 'Czerwony', keys: 'Ctrl+3' },
  { name: 'Zielony', keys: 'Ctrl+4', active: true },
  { name: 'Niebieski', keys: 'Ctrl+5' },
];

const HISTORY = [
  { text: 'Spłaszcz obraz', icon: 'state' },
  { text: 'Wklej', icon: 'state' },
  { text: 'Ołówek', icon: 'pencil' },
  { text: 'Spłaszcz obraz', icon: 'state' },
  { text: 'Rozmiar obrazu', icon: 'dialogState', active: true },
];

function Well({ active = false }) {
  return (
    <span
      className={`h-[9px] w-[9px] border border-t-[#cdcdcd] border-r-[#888] border-b-[#888] border-l-[#cdcdcd] ${active ? 'bg-[#a9b9e0]' : 'bg-[#b9b9b9]'}`}
    />
  );
}

function Thumb() {
  return (
    <svg viewBox="0 0 23 15" className="h-[15px] w-[23px]" aria-hidden="true">
      <rect width="23" height="15" fill="#333" />
      <rect x="1" y="1" width="21" height="13" fill="#999" />
      <path d="M1 1h21v1H1z" fill="#bbb" />
      <path d="M3 4h13v8H3z" fill="#000" />
      <path d="M11 2h6v5h-6z" fill="#eee" />
      <path d="M18 2h4v11h-4z" fill="#bbb" />
      <path d="M1 13h21v1H1z" fill="#333" />
      <path d="M12 4.500h3" stroke="#666" />
    </svg>
  );
}

function ScrollTrack() {
  return <div className="w-3 shrink-0 bg-linear-to-r from-[#ccc] via-[#f0f0f0] to-[#dcdcdc]" />;
}

function RightDock() {
  return (
    <aside className="flex w-[245px] shrink-0 flex-col border-l border-[#555] bg-[#a3a3a3]">
      <div className="flex h-2 shrink-0 items-center justify-end border-b border-[#666] bg-[#7c7c7c] pr-[3px]"><Chevrons /></div>
      <section className="flex h-[233px] shrink-0 flex-col">
        <div className="flex h-3.5 shrink-0 border-b border-[#777] bg-[#858585] font-bold">
          <button className="px-1 text-[#111]">Warstwy</button>
          <button className="border-x border-[#666] bg-[#b8b8b8] px-1 text-black">Kanały</button>
          <PanelMenuIcon />
        </div>
        <div className="flex min-h-0 flex-1">
          <div className="flex-1">
            <ul className="flex h-[75px] flex-col">
              {CHANNELS.map((c) => (
                <li key={c.name} className={`flex flex-1 items-center border-b border-[#8a8a8a] pr-1.5 pl-1 ${c.active ? 'bg-[#a4b5dd]' : 'bg-[#b6b6b6]'}`}>
                  <button aria-label={`Widoczność ${c.name}`} className="flex w-[9px] justify-center">
                    {c.active ? <Glyph name="eye" className="h-2.5 w-2.5 shrink-0" /> : <Well />}
                  </button>
                  <span className="mr-1 ml-[5px]"><Thumb /></span>
                  <span className="flex-1">{c.name}</span>
                  <span>{c.keys}</span>
                </li>
              ))}
            </ul>
          </div>
          <ScrollTrack />
        </div>
        <div className="flex h-3.5 shrink-0 items-center justify-end border-t border-[#888] bg-[#b8b8b8]">
          <div className="flex gap-[11px] pr-2">
            {[['loadSel', 'Wczytaj zaznaczenie'], ['saveMask', 'Zapisz zaznaczenie'], ['newItem', 'Nowy kanał'], ['trash', 'Usuń kanał']].map(([n, label]) => (
              <button key={n} aria-label={label}><Glyph name={n} className="h-2.5 w-2.5" /></button>
            ))}
          </div>
          <svg viewBox="0 0 10 10" className="mr-px h-2.5 w-2.5 self-end" aria-hidden="true"><path d="M1 9L9 1M4 9l5-5M7 9l2-2" stroke="#888" /></svg>
        </div>
      </section>
      <section className="flex min-h-0 flex-1 flex-col border-t-2 border-[#666]">
        <div className="flex h-3.5 shrink-0 border-b border-[#777] bg-[#858585] font-bold">
          <button className="border-r border-[#666] bg-[#b8b8b8] px-[5px] text-black">Historia</button>
          <PanelMenuIcon />
        </div>
        <div className="flex min-h-0 flex-1">
          <div className="flex-1">
            <div className="flex h-[21px] items-center border-b-[3px] border-double border-[#8a8a8a] bg-[#b6b6b6] pl-1">
              <Glyph name="history" className="h-2.5 w-2.5" />
              <svg viewBox="0 0 23 15" className="mx-1 h-[15px] w-[23px]" aria-hidden="true">
                <defs>
                  <pattern id="checker" width="6" height="6" patternUnits="userSpaceOnUse">
                    <rect width="6" height="6" fill="#fff" /><path d="M0 0h3v3H0zM3 3h3v3H3z" fill="#ccc" />
                  </pattern>
                </defs>
                <rect x=".5" y=".5" width="22" height="14" fill="url(#checker)" stroke="#333" />
              </svg>
              Bez nazwy-1
            </div>
            <ol className="flex h-[83px] flex-col">
              {HISTORY.map((h, i) => (
                <li key={i} className={`flex flex-1 items-center border-b border-[#8a8a8a] pl-1 ${h.active ? 'bg-[#a4b5dd]' : 'bg-[#b6b6b6]'}`}>
                  <Well active={h.active} />
                  <Glyph name={h.icon} className="mr-2 ml-[9px] h-3 w-3" />
                  <button>{h.text}</button>
                </li>
              ))}
            </ol>
          </div>
          <ScrollTrack />
        </div>
        <div className="flex h-[13px] shrink-0 items-center justify-end gap-[11px] border-t border-[#888] bg-[#b8b8b8] pr-[19px]">
          {[['newDoc', 'Nowy dokument'], ['camera', 'Migawka'], ['trash', 'Usuń stan']].map(([n, label]) => (
            <button key={n} aria-label={label}><Glyph name={n} className="h-2.5 w-2.5" /></button>
          ))}
        </div>
      </section>
    </aside>
  );
}

export default function App() {
  return (
    <div className="flex h-screen w-full flex-col overflow-hidden bg-[#626262] font-['DejaVu_Sans_Condensed','Noto_Sans',sans-serif] text-[9px] leading-3 text-[#1c1c1c]">
      <TopBars />
      <div className="flex min-h-0 flex-1">
        <Toolbar active="pencil" />
        <Workspace />
        <RightDock />
      </div>
      <Taskbar />
    </div>
  );
}
